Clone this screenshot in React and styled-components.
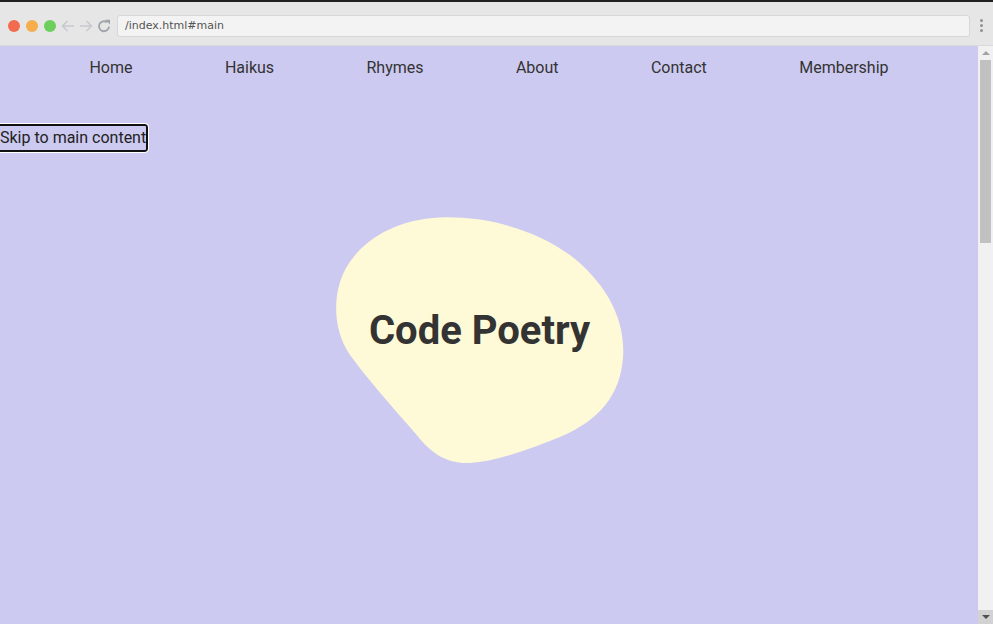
import React from "react";
import styled, { createGlobalStyle } from "styled-components";

const Global = createGlobalStyle`
  html, body { margin: 0; padding: 0; height: 100%; overflow: hidden; }
  body { font-family: Roboto, "Liberation Sans", sans-serif; }
  #root { height: 100%; }
`;

const Window = styled.div`
  width: 993px;
  height: 624px;
  display: flex;
  flex-direction: column;
  background: #e6e6e6;
  border-top: 2px solid #1f2121;
  box-sizing: border-box;
`;

const Chrome = styled.div`
  height: 44px;
  flex: none;
  display: flex;
  align-items: center;
  padding: 4px 8px 0 8px;
  border-bottom: 1px solid #d9d9d9;
  box-sizing: border-box;
  background: #e6e6e6;
`;

const Light = styled.span`
  width: 12px;
  height: 12px;
  border-radius: 50%;
  background: ${(p) => p.$c};
  margin-right: ${(p) => p.$mr ?? 6}px;
  flex: none;
`;

const NavIcon = styled.svg`
  flex: none;
  margin-right: ${(p) => p.$mr ?? 4}px;
`;

const Url = styled.div`
  flex: 1;
  height: 22px;
  margin-left: 6px;
  margin-right: 7px;
  background: #f3f3f3;
  border: 1px solid #d7d7d7;
  border-radius: 3px;
  box-sizing: border-box;
  display: flex;
  align-items: center;
  padding-left: 7px;
  font-family: "DejaVu Sans", sans-serif;
  font-size: 11px;
  color: #555;
`;

const Kebab = styled.div`
  width: 8px;
  display: flex;
  flex-direction: column;
  align-items: center;
  gap: 2px;
  span {
    width: 3px;
    height: 3px;
    border-radius: 50%;
    background: #8d9196;
  }
`;

const Viewport = styled.div`
  flex: 1;
  display: flex;
  min-height: 0;
`;

const Content = styled.div`
  flex: 1;
  background: #cdcaf1;
  color: #333;
  display: flex;
  flex-direction: column;
  overflow: hidden;
`;

const Nav = styled.nav`
  display: flex;
  justify-content: center;
  gap: 92.4px;
  padding: 12px 0 0;
`;

const NavLink = styled.a`
  font-size: 16px;
  line-height: 19px;
  color: #333;
  text-decoration: none;
`;

const SkipRow = styled.div`
  margin-top: 47px;
  display: flex;
`;

const SkipLink = styled.a`
  margin-left: -3px;
  padding: 3px 0 3px 1px;
  font-size: 16px;
  line-height: 18px;
  color: #222;
  text-decoration: none;
  border: 2px solid #111;
  border-radius: 3px;
  outline: 1px solid #fff;
`;

const Main = styled.main`
  display: flex;
  justify-content: center;
  padding-right: 19px;
  margin-top: 65px;
`;

const Hero = styled.div`
  position: relative;
  width: 290px;
  height: 247px;
  display: flex;
  align-items: center;
  justify-content: center;
`;

const Blob = styled.svg`
  position: absolute;
  inset: 0;
`;

const Title = styled.h1`
  position: relative;
  margin: 0 0 19px 0;
  font-size: 40px;
  font-weight: 700;
  color: #333;
  line-height: 1;
`;

const Scrollbar = styled.div`
  width: 15px;
  flex: none;
  background: #f1f1f1;
  display: flex;
  flex-direction: column;
`;

const ScrollButton = styled.div`
  height: 14px;
  flex: none;
  display: flex;
  align-items: center;
  justify-content: center;
  background: ${(p) => (p.$active ? "#d2d2d2" : "#f1f1f1")};
`;

const Arrow = styled.span`
  width: 0;
  height: 0;
  border-left: 4px solid transparent;
  border-right: 4px solid transparent;
  ${(p) =>
    p.$down
      ? `border-top: 4px solid #505050;`
      : `border-bottom: 4px solid #a3a3a3;`}
`;

const Track = styled.div`
  flex: 1;
  padding: 0 2px;
`;

const Thumb = styled.div`
  height: 183px;
  background: #c1c1c1;
`;

const links = ["Home", "Haikus", "Rhymes", "About", "Contact", "Membership"];

export default function App() {
  return (
    <>
      <Global />
      <Window>
        <Chrome>
          <Light $c="#f26b4f" />
          <Light $c="#f5ae4b" />
          <Light $c="#6ccf5d" $mr={5} />
          <NavIcon width="14" height="14" viewBox="0 0 14 14" $mr={4}>
            <path d="M13 7H1.5M6.5 2L1.5 7l5 5" fill="none" stroke="#c6c9ce" strokeWidth="1.5" />
          </NavIcon>
          <NavIcon width="14" height="14" viewBox="0 0 14 14" $mr={4}>
            <path d="M1 7h11.5M7.5 2l5 5-5 5" fill="none" stroke="#c6c9ce" strokeWidth="1.5" />
          </NavIcon>
          <NavIcon width="14" height="14" viewBox="0 0 14 14" $mr={0}>
            <path d="M12 7.5A5 5 0 1 1 10.2 3.4" fill="none" stroke="#9fa3a9" strokeWidth="1.8" />
            <path d="M8.2 0.8h4.8v4.8z" fill="#9fa3a9" />
          </NavIcon>
          <Url>/index.html#main</Url>
          <Kebab>
            <span />
            <span />
            <span />
          </Kebab>
        </Chrome>
        <Viewport>
          <Content>
            <Nav>
              {links.map((l) => (
                <NavLink key={l} href="#">
                  {l}
                </NavLink>
              ))}
            </Nav>
            <SkipRow>
              <SkipLink href="#main">Skip to main content</SkipLink>
            </SkipRow>
            <Main id="main">
              <Hero>
                <Blob width="290" height="247" viewBox="335 217 290 247">
                  <path
                    fill="#fef9d6"
                    d="M440 217.5 C 480 216, 530 226, 570 255 C 605 282, 626 318, 623 358 C 620 395, 600 420, 560 437 C 530 449, 495 462, 470 463 C 445 464, 430 452, 415 433 C 395 410, 368 380, 350 355 C 335 333, 333 305, 340 282 C 350 250, 385 220, 440 217.5 Z"
                  />
                </Blob>
                <Title>Code Poetry</Title>
              </Hero>
            </Main>
          </Content>
          <Scrollbar>
            <ScrollButton>
              <Arrow />
            </ScrollButton>
            <Track>
              <Thumb />
            </Track>
            <ScrollButton $active>
              <Arrow $down />
            </ScrollButton>
          </Scrollbar>
        </Viewport>
      </Window>
    </>
  );
}
